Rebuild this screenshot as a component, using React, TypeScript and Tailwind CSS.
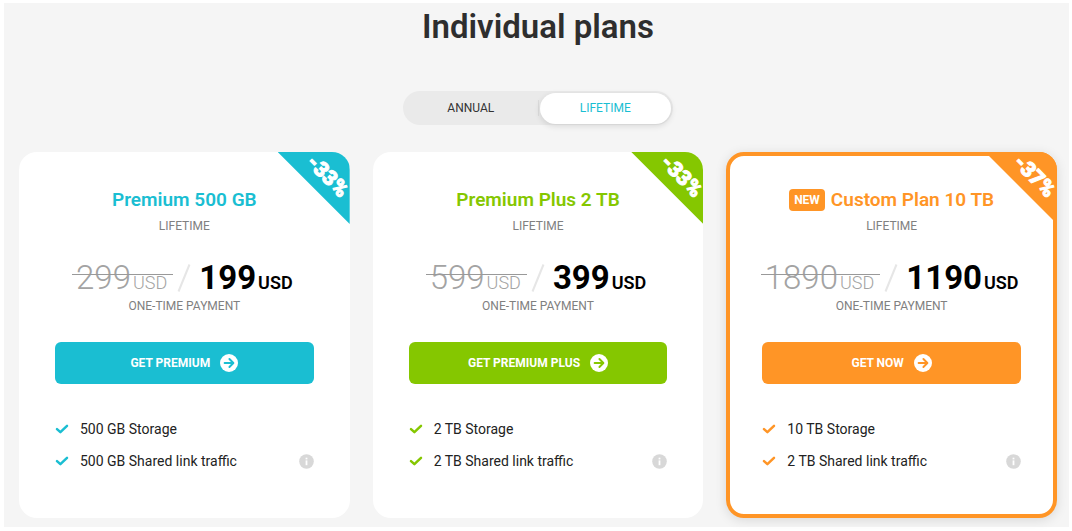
import { useState } from "react";
import clsx from "clsx";

const plans = [
  {
    name: "Premium 500 GB",
    oldPrice: "299",
    price: "199",
    discount: "-33%",
    cta: "Get Premium",
    storage: "500 GB Storage",
    traffic: "500 GB Shared link traffic",
    text: "text-[#1abed2]",
    bg: "bg-[#1abed2]",
    featured: false,
  },
  {
    name: "Premium Plus 2 TB",
    oldPrice: "599",
    price: "399",
    discount: "-33%",
    cta: "Get Premium Plus",
    storage: "2 TB Storage",
    traffic: "2 TB Shared link traffic",
    text: "text-[#85c700]",
    bg: "bg-[#85c700]",
    featured: false,
  },
  {
    name: "Custom Plan 10 TB",
    oldPrice: "1890",
    price: "1190",
    discount: "-37%",
    cta: "Get now",
    storage: "10 TB Storage",
    traffic: "2 TB Shared link traffic",
    text: "text-[#ff9526]",
    bg: "bg-[#ff9526]",
    featured: true,
  },
];

const periods = ["Annual", "Lifetime"];

type Plan = (typeof plans)[number];

function CheckIcon({ className }: { className: string }) {
  return (
    <svg width="14" height="12" viewBox="0 0 14 12" fill="none" className={className} aria-hidden="true">
      <path d="M2 6.1 L5.4 9.2 L12 2.8" stroke="currentColor" strokeWidth="2.5" strokeLinecap="round" strokeLinejoin="round" />
    </svg>
  );
}

function ArrowIcon({ className }: { className: string }) {
  return (
    <svg width="18" height="18" viewBox="0 0 18 18" fill="none" className={className} aria-hidden="true">
      <circle cx="9" cy="9" r="9" fill="#fff" />
      <path d="M4.6 9 H13 M9.4 5 L13.4 9 L9.4 13" stroke="currentColor" strokeWidth="1.9" strokeLinecap="round" strokeLinejoin="round" />
    </svg>
  );
}

function InfoIcon() {
  return (
    <svg width="15" height="15" viewBox="0 0 15 15" aria-hidden="true">
      <circle cx="7.5" cy="7.5" r="7.3" fill="#d8d8d8" />
      <rect x="6.6" y="6.4" width="1.8" height="4.8" fill="#fff" />
      <rect x="6.6" y="3.7" width="1.8" height="1.7" fill="#fff" />
    </svg>
  );
}

function PlanCard({ plan }: { plan: Plan }) {
  return (
    <article
      className={clsx(
        "relative rounded-[18px] bg-white",
        plan.featured
          ? "border-4 border-[#ff9526] px-8 pt-8 pb-[43px] shadow-[0_2px_12px_rgba(0,0,0,0.12)]"
          : "px-9 pt-9 pb-[47px]"
      )}
    >
      {/* Discount corner */}
      <div
        className={clsx(
          "absolute flex size-[72px] items-center justify-center",
          plan.featured ? "-top-1 -right-1" : "top-0 right-0"
        )}
      >
        <div
          className={clsx(
            "absolute inset-0 rounded-tr-[18px] [clip-path:polygon(0_0,100%_0,100%_100%)]",
            plan.bg
          )}
        />
        <span className="relative mb-6 ml-7 rotate-45 text-[21px] leading-4 font-black text-white [-webkit-text-stroke:1px_#fff]">
          {plan.discount}
        </span>
      </div>

      <div className="text-center">
        <h2 className={clsx("flex items-center justify-center gap-1.5 text-[19px] leading-6 font-semibold", plan.text)}>
          {plan.featured && (
            <span className={clsx("rounded px-[5px] text-xs leading-[22px] font-bold text-white", plan.bg)}>NEW</span>
          )}
          {plan.name}
        </h2>
        <p className="mt-1 text-xs leading-5 text-[#808080] uppercase">Lifetime</p>

        <div className="mt-6 flex h-9 items-center justify-center">
          <s className="relative flex items-baseline gap-0.5 pr-1.5 pl-1 leading-9 font-light text-[#a3a3a3] no-underline after:absolute after:inset-x-0 after:top-3.5 after:h-px after:bg-[#999999]">
            <span className="text-[33px]">{plan.oldPrice}</span>
            <span className="text-lg leading-6">USD</span>
          </s>
          <svg width="14" height="28" viewBox="0 0 14 28" className="mx-1 shrink-0" aria-hidden="true">
            <path d="M12.5 0.5 L1.5 27.5" stroke="#e6e6e6" strokeWidth="2" />
          </svg>
          <strong className="flex items-baseline gap-0.5 px-1 leading-9 text-black">
            <span className="text-[33px] font-bold">{plan.price}</span>
            <span className="text-lg leading-6 font-semibold">USD</span>
          </strong>
        </div>
        <p className="text-xs leading-5 text-[#808080] uppercase">One-time payment</p>
      </div>

      <button
        type="button"
        className={clsx(
          "mt-[26px] flex h-[42px] w-full items-center justify-center gap-2.5 rounded-md text-xs font-bold text-white uppercase",
          plan.bg
        )}
      >
        {plan.cta}
        <ArrowIcon className={plan.text} />
      </button>

      <ul className="mt-[35px] flex flex-col gap-3 text-sm leading-5 text-[#222222]">
        <li className="flex items-center gap-[11px]">
          <CheckIcon className={plan.text} />
          {plan.storage}
        </li>
        <li className="flex items-center gap-[11px]">
          <CheckIcon className={plan.text} />
          {plan.traffic}
          <button type="button" aria-label="More about shared link traffic" className="ml-auto">
            <InfoIcon />
          </button>
        </li>
      </ul>
    </article>
  );
}

export default function App() {
  const [period, setPeriod] = useState("Lifetime");

  return (
    <main className="bg-white pt-[3px] pr-[3px] pb-1 pl-1 font-[Roboto,sans-serif]">
      <section className="bg-[#f5f5f5] pt-1 pr-3 pb-[9px] pl-[15px]">
        <h1 className="text-center text-[33px] leading-10 font-semibold text-[#2e2e2e]">Individual plans</h1>

        {/* Billing period switch */}
        <div className="mx-auto mt-11 flex h-[34px] w-[270px] items-center divide-x divide-[#dcdcdc] rounded-full bg-[#eaeaea] p-px">
          {periods.map((item) => (
            <div key={item} className="flex h-4 flex-1 items-center">
              <button
                type="button"
                aria-pressed={period === item}
                onClick={() => setPeriod(item)}
                className={clsx(
                  "mx-px h-[31px] w-full rounded-full text-xs uppercase",
                  period === item ? "bg-white text-[#1abed2] shadow-[0_2px_6px_rgba(0,0,0,0.12)]" : "text-[#333333]"
                )}
              >
                {item}
              </button>
            </div>
          ))}
        </div>

        <div className="mt-[27px] grid grid-cols-3 gap-[23px]">
          {plans.map((plan) => (
            <PlanCard key={plan.name} plan={plan} />
          ))}
        </div>
      </section>
    </main>
  );
}
